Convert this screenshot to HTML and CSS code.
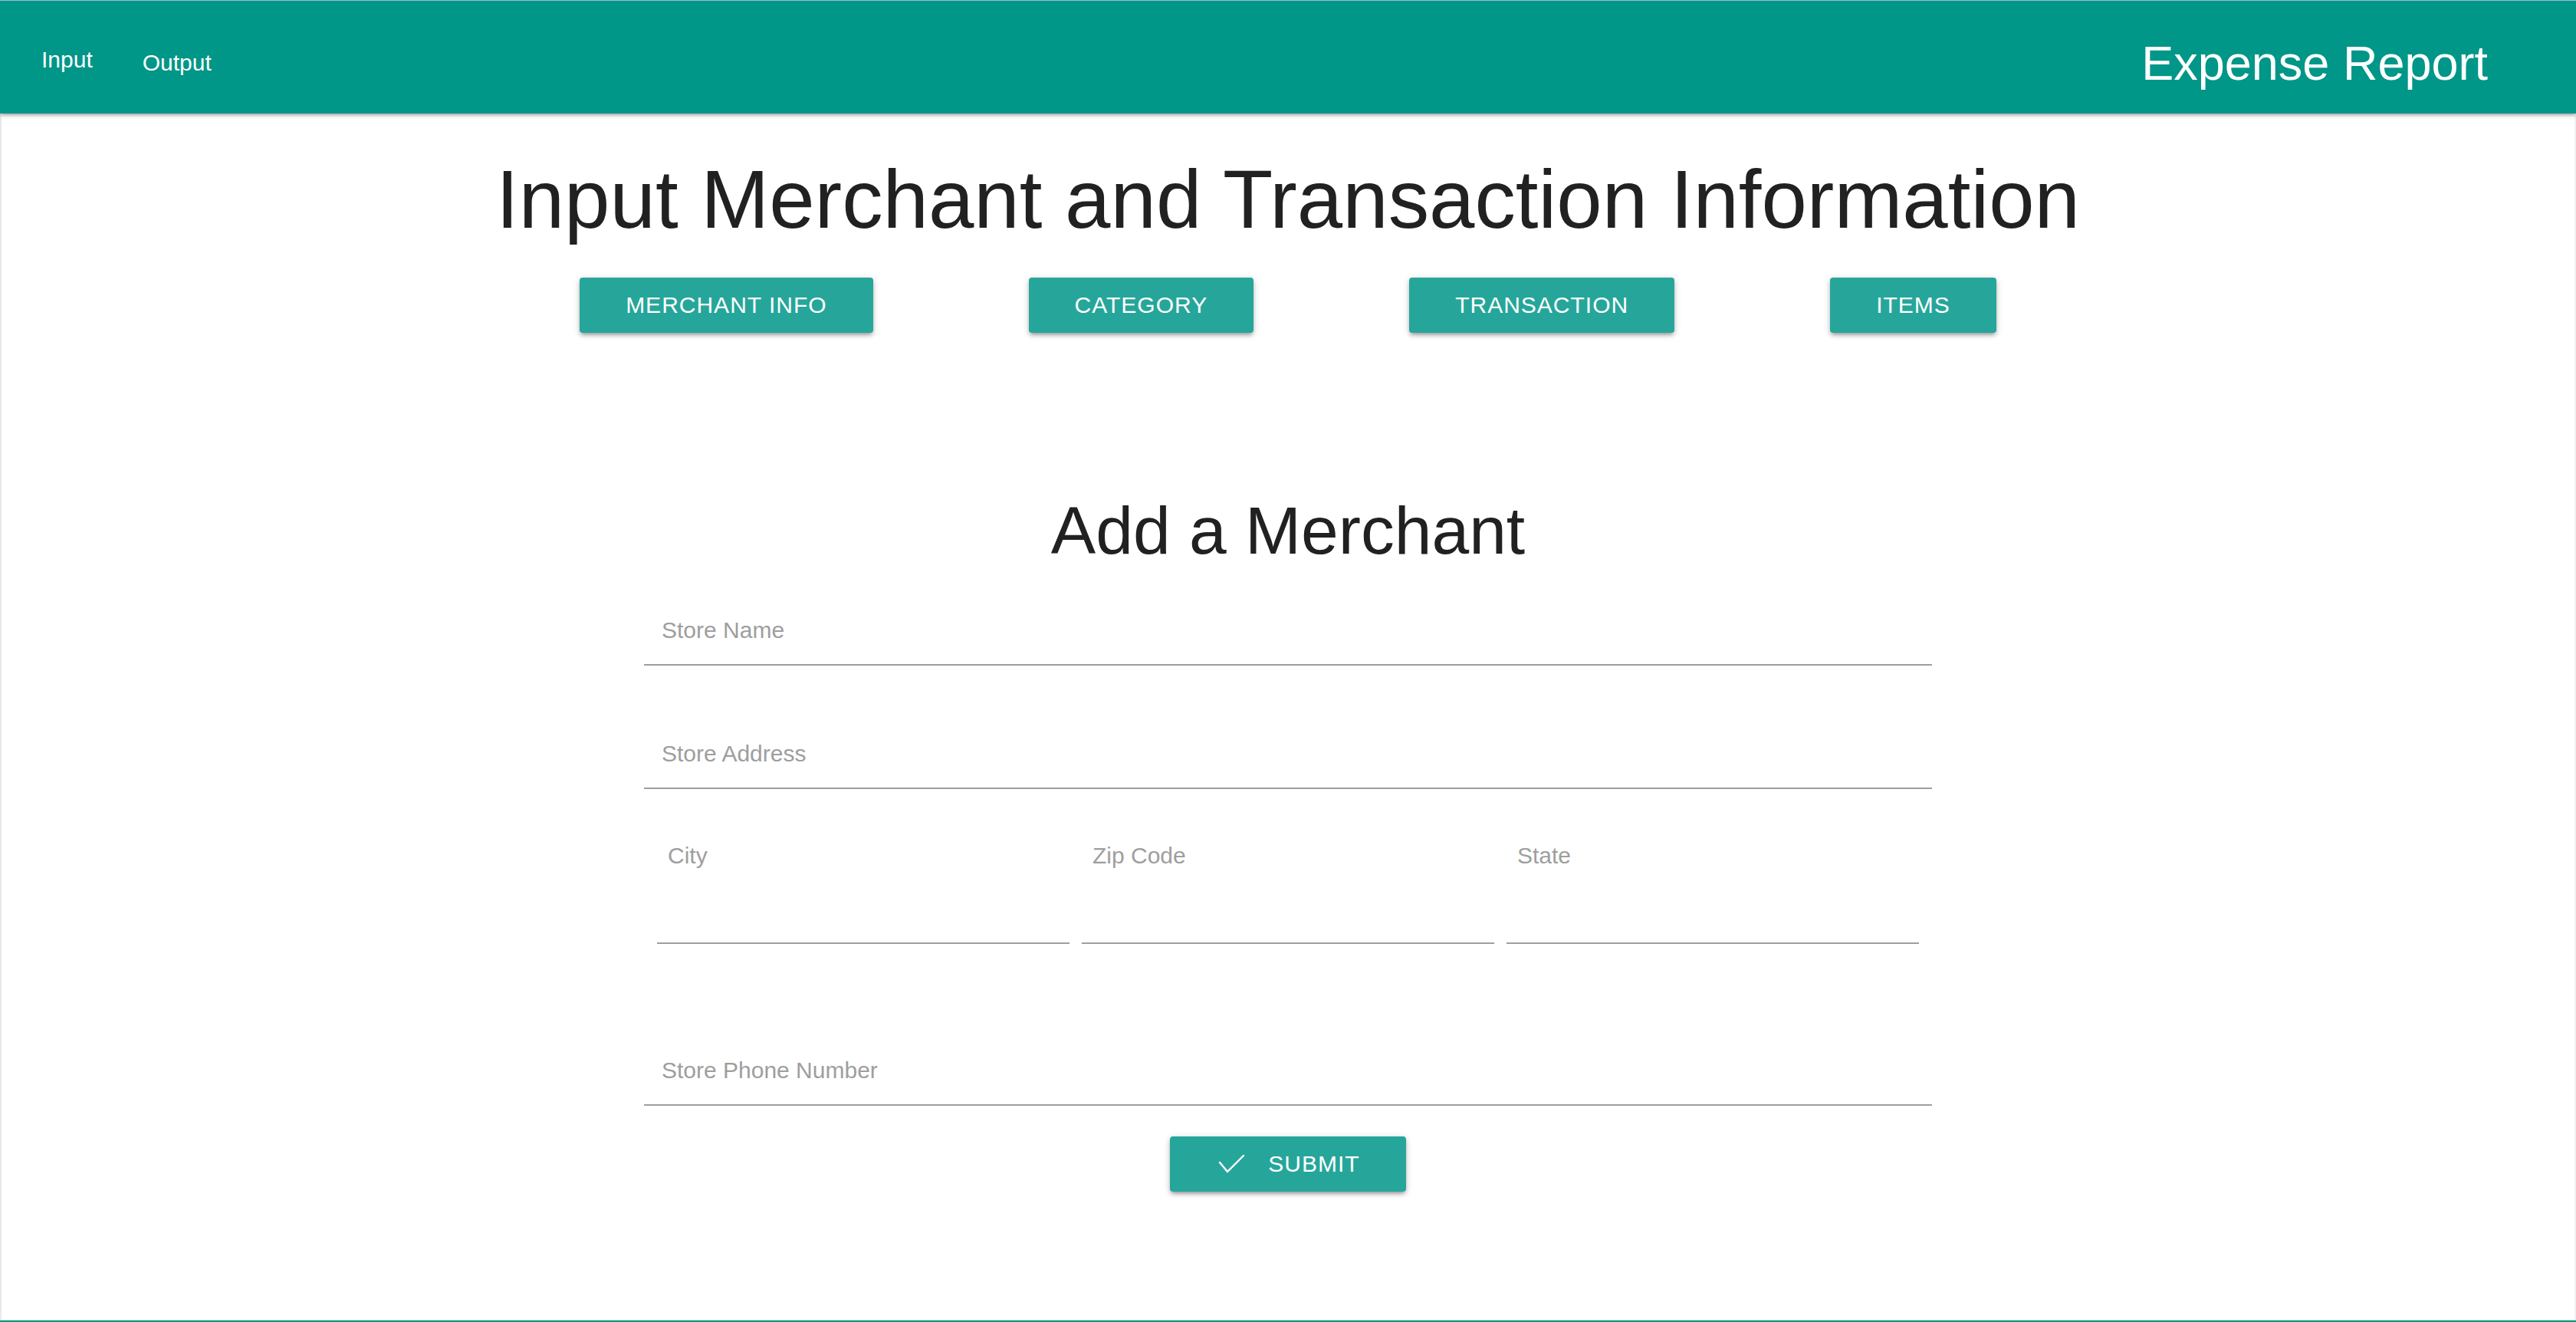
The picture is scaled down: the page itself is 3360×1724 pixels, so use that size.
FILE: index.html
```html
<!DOCTYPE html>
<html lang="en">
<head>
<meta charset="utf-8">
<title>Expense Report</title>
<link rel="stylesheet" href="styles.css">
</head>
<body>
  <nav class="topbar">
    <ul class="nav-links">
      <li><a class="nav-link nav-link-input" href="#">Input</a></li>
      <li><a class="nav-link nav-link-output" href="#">Output</a></li>
    </ul>
    <span class="brand">Expense Report</span>
  </nav>
  <main class="page">
    <h1 class="page-title">Input Merchant and Transaction Information</h1>
    <div class="tab-buttons">
      <button class="btn" type="button">Merchant Info</button>
      <button class="btn" type="button">Category</button>
      <button class="btn" type="button">Transaction</button>
      <button class="btn" type="button">Items</button>
    </div>
    <h2 class="form-title">Add a Merchant</h2>
    <form class="merchant-form">
      <div class="field field-name"><label class="field-label">Store Name</label></div>
      <div class="field field-address"><label class="field-label">Store Address</label></div>
      <div class="field-row">
        <div class="field-cell"><label class="field-label">City</label></div>
        <div class="field-cell"><label class="field-label">Zip Code</label></div>
        <div class="field-cell"><label class="field-label">State</label></div>
      </div>
      <div class="field field-phone"><label class="field-label">Store Phone Number</label></div>
      <div class="submit-wrap">
        <button class="btn btn-submit" type="button">
          <svg class="check-icon" width="38" height="24" viewBox="0 0 38 24" aria-hidden="true">
            <polyline points="5,10 15,22 36,1" fill="none" stroke="#ffffff" stroke-width="2.4" stroke-linecap="round" stroke-linejoin="round"/>
          </svg>
          <span>Submit</span>
        </button>
      </div>
    </form>
  </main>
  <footer class="footer-strip"></footer>
</body>
</html>
```

FILE: styles.css
```css
html, body {
  margin: 0;
  padding: 0;
}

body {
  font-family: "Liberation Sans", Arial, Helvetica, sans-serif;
  background: #ffffff;
  color: #212121;
  min-height: 100vh;
  display: flex;
  flex-direction: column;
}

.topbar {
  position: relative;
  z-index: 2;
  height: 147px;
  border-top: 1px solid #a9b9d4;
  background: #009688;
  display: flex;
  justify-content: space-between;
  align-items: flex-start;
  padding: 0 115px 0 24px;
  box-shadow: 0 3px 3px 0 rgba(0,0,0,0.14), 0 4px 2px -3px rgba(0,0,0,0.12), 0 2px 7px 0 rgba(0,0,0,0.18);
}

.nav-links {
  list-style: none;
  margin: 0;
  padding: 0;
  display: flex;
  gap: 5px;
}

.nav-link {
  display: block;
  color: #ffffff;
  text-decoration: none;
  font-size: 30px;
  line-height: 30px;
  padding: 0 30px;
}

.nav-link-input {
  margin-top: 61.6px;
}

.nav-link-output {
  margin-top: 66px;
}

.brand {
  color: #ffffff;
  font-size: 63px;
  line-height: 63px;
  margin-top: 49.7px;
}

.page {
  flex: 1;
  border-left: 2px solid #e8e8e8;
  border-right: 2px solid #f0f0f0;
}

.page-title {
  margin: 54px 0 0;
  font-size: 106.8px;
  line-height: 117.5px;
  font-weight: 400;
  text-align: center;
  color: #212121;
}

.tab-buttons {
  margin-top: 42.5px;
  display: flex;
  justify-content: center;
  gap: 203px;
}

.btn {
  height: 72px;
  line-height: 72px;
  padding: 0 60px;
  border: none;
  border-radius: 4px;
  background: #26a69a;
  color: #ffffff;
  font-family: inherit;
  font-size: 30px;
  letter-spacing: 1px;
  text-transform: uppercase;
  box-shadow: 0 4px 4px 0 rgba(0,0,0,0.14), 0 6px 2px -4px rgba(0,0,0,0.12), 0 2px 10px 0 rgba(0,0,0,0.2);
  cursor: pointer;
}

.form-title {
  margin: 210.4px 0 0;
  font-size: 87.6px;
  line-height: 96.4px;
  font-weight: 400;
  text-align: center;
  color: #212121;
}

.merchant-form {
  width: 1680px;
  margin: 0 auto;
}

.field {
  border-bottom: 2px solid #9e9e9e;
  padding: 0 0 29.4px 23px;
}

.field-label {
  display: block;
  font-size: 30px;
  line-height: 30px;
  color: #9e9e9e;
}

.field-name {
  margin-top: 65.8px;
}

.field-address {
  margin-top: 99.6px;
}

.field-row {
  margin: 71.6px 17px 0;
  display: grid;
  grid-template-columns: repeat(3, 1fr);
  gap: 16px;
}

.field-cell {
  border-bottom: 2px solid #9e9e9e;
  padding: 0 0 98px 14px;
}

.field-phone {
  margin-top: 150px;
}

.submit-wrap {
  margin-top: 40px;
  display: flex;
  justify-content: center;
}

.btn-submit {
  display: flex;
  align-items: center;
}

.check-icon {
  display: block;
  margin-right: 30px;
}

.footer-strip {
  height: 2px;
  border-top: 1px solid #c9eeea;
  background: #009688;
}
```
